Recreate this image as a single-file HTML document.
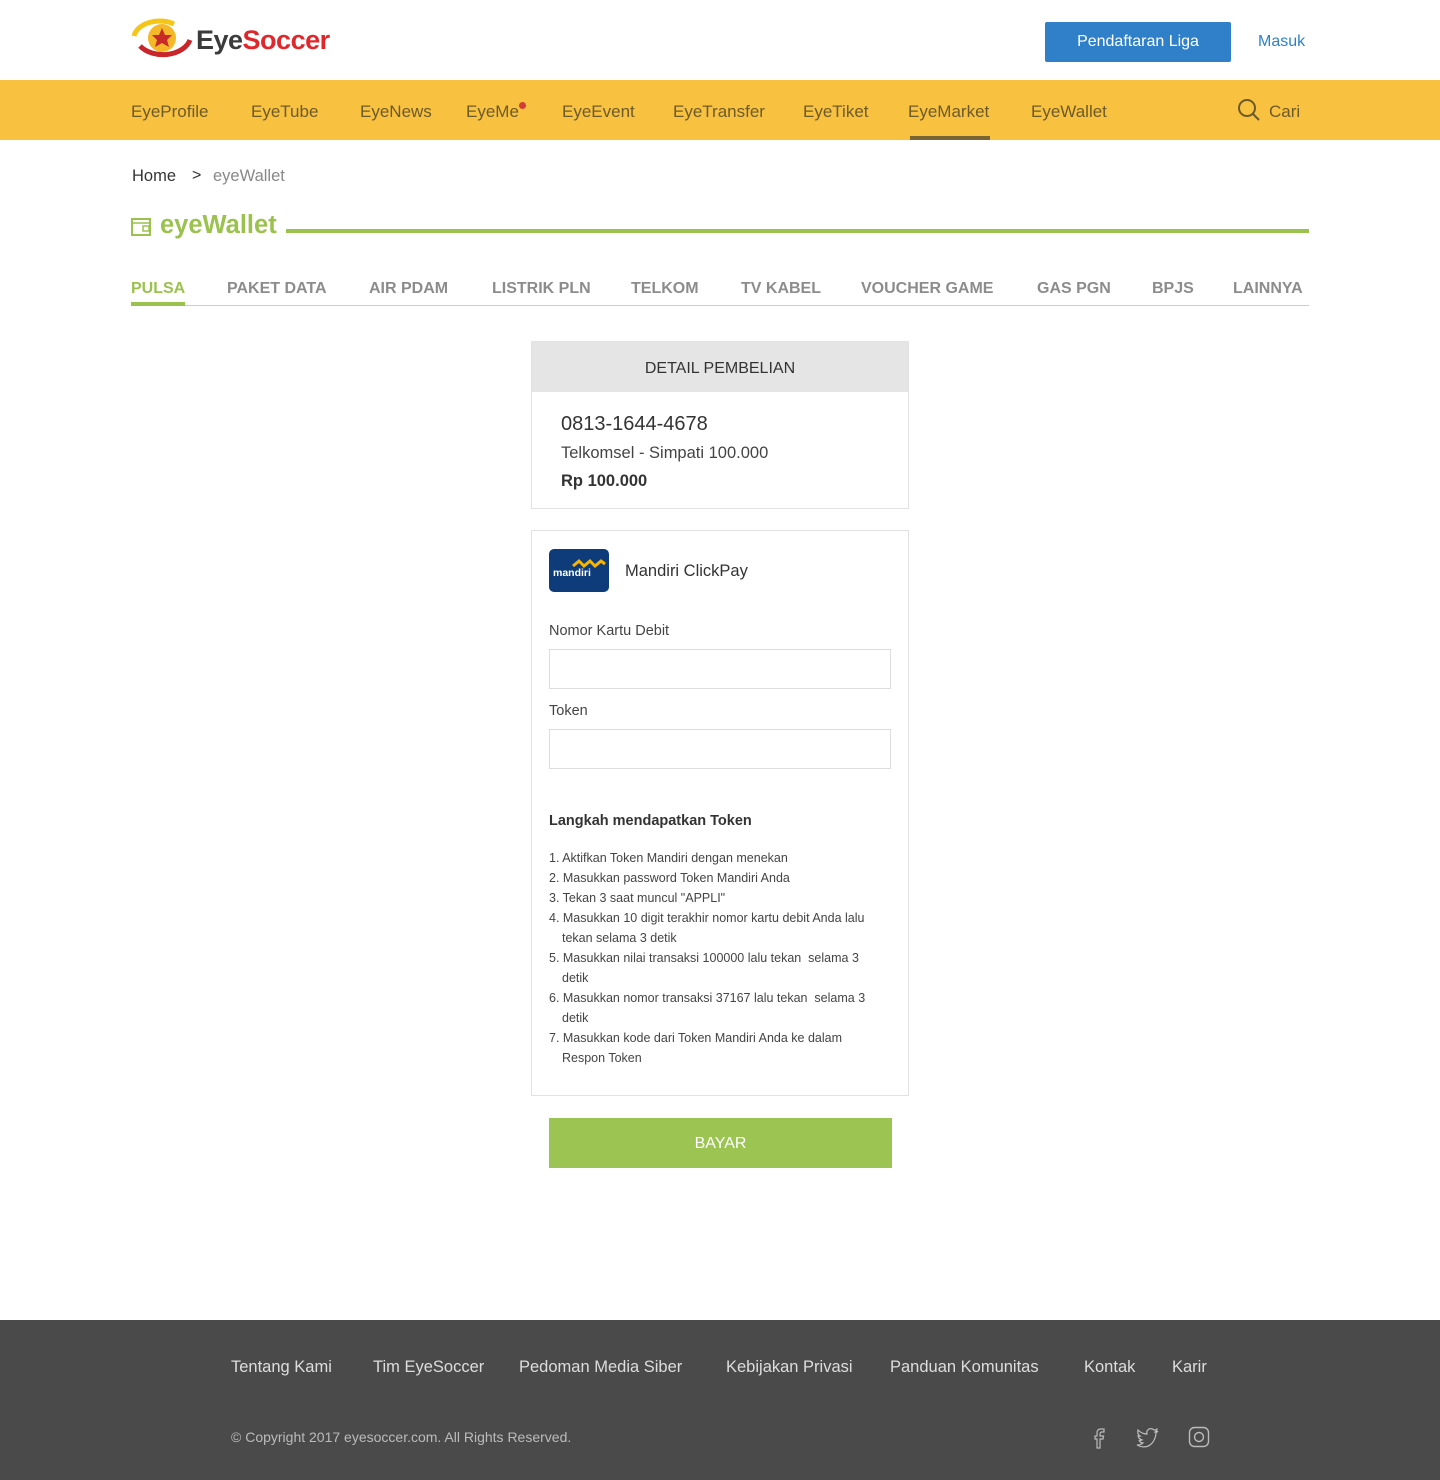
<!DOCTYPE html>
<html><head><meta charset="utf-8"><style>
*{margin:0;padding:0;box-sizing:border-box}
body{width:1440px;height:1480px;background:#fff;font-family:"Liberation Sans",sans-serif;position:relative;color:#333;overflow:hidden}
.a{position:absolute;white-space:nowrap}
.nav{position:absolute;top:80px;left:0;width:1440px;height:60px;background:#f8c13f}
.nav span{position:absolute;top:22px;font-size:17px;color:#6d5a2a}
.tab{position:absolute;top:280px;font-size:16px;font-weight:bold;color:#8c8c8c}
.box{position:absolute;left:531px;width:378px;border:1px solid #e2e2e2;background:#fff}
.inp{position:absolute;left:549px;width:342px;height:40px;border:1px solid #ddd}
.st{position:absolute;left:549px;font-size:12.5px;color:#444}
.foot{position:absolute;top:1320px;left:0;width:1440px;height:160px;background:#4a4a4a}
.foot span{position:absolute;top:38px;font-size:16.5px;color:#ddd}
</style></head><body>
<svg class="a" style="left:130px;top:18px" width="64" height="42" viewBox="0 0 64 42">
<path d="M4 18 A26 18 0 0 1 44 6" stroke="#f5c518" stroke-width="5" fill="none"/>
<circle cx="32" cy="20" r="14" fill="#f4b829"/><path d="M32 10 l3 7 7 0 -5 5 2 7 -7 -4 -7 4 2 -7 -5 -5 7 0z" fill="#c82a2a"/>
<path d="M10 28 A28 20 0 0 0 60 22" stroke="#c8262b" stroke-width="5" fill="none"/>
</svg>
<div class="a" style="left:196px;top:25px;font-size:27px;font-weight:bold;letter-spacing:-0.5px"><span style="color:#3b3b3b">Eye</span><span style="color:#e0282c">Soccer</span></div>
<div class="a" style="left:1045px;top:22px;width:186px;height:40px;background:#2f80c8;border-radius:2px;color:#fff;font-size:16px;text-align:center;line-height:40px">Pendaftaran Liga</div>
<div class="a" style="left:1258px;top:33px;font-size:16px;color:#2f80c8">Masuk</div>
<div class="nav">
<span style="left:131px">EyeProfile</span><span style="left:251px">EyeTube</span><span style="left:360px">EyeNews</span><span style="left:466px">EyeMe</span>
<div class="a" style="left:519px;top:22px;width:7px;height:7px;border-radius:50%;background:#d63a3a"></div>
<span style="left:562px">EyeEvent</span><span style="left:673px">EyeTransfer</span><span style="left:803px">EyeTiket</span><span style="left:908px">EyeMarket</span><span style="left:1031px">EyeWallet</span>
<div class="a" style="left:910px;top:56px;width:80px;height:4px;background:#7a6532"></div>
<svg class="a" style="left:1238px;top:19px" width="22" height="22" viewBox="0 0 22 22"><circle cx="9" cy="9" r="8" stroke="#6d5a2a" stroke-width="2" fill="none"/><path d="M15 15 l6 6" stroke="#6d5a2a" stroke-width="2"/></svg>
<span style="left:1269px">Cari</span>
</div>
<div class="a" style="left:132px;top:167px;font-size:16.5px;color:#333">Home</div>
<div class="a" style="left:192px;top:167px;font-size:16px;color:#333">&gt;</div>
<div class="a" style="left:213px;top:167px;font-size:16.5px;color:#888">eyeWallet</div>
<svg class="a" style="left:131px;top:216px" width="20" height="20" viewBox="0 0 20 20"><rect x="1" y="3" width="18" height="16" stroke="#9bc14e" stroke-width="2" fill="none"/><path d="M1 7 H19" stroke="#9bc14e" stroke-width="1.5"/><rect x="12" y="10" width="6" height="5" stroke="#9bc14e" stroke-width="1.5" fill="none"/></svg>
<div class="a" style="left:160px;top:211px;font-size:25.5px;font-weight:bold;color:#9bc14e">eyeWallet</div>
<div class="a" style="left:286px;top:229px;width:1023px;height:4px;background:#9bc14e"></div>
<div class="tab" style="left:131px;color:#9bc14e">PULSA</div>
<div class="tab" style="left:227px">PAKET DATA</div><div class="tab" style="left:369px">AIR PDAM</div><div class="tab" style="left:492px">LISTRIK PLN</div><div class="tab" style="left:631px">TELKOM</div><div class="tab" style="left:741px">TV KABEL</div><div class="tab" style="left:861px">VOUCHER GAME</div><div class="tab" style="left:1037px">GAS PGN</div><div class="tab" style="left:1152px">BPJS</div><div class="tab" style="left:1233px">LAINNYA</div>
<div class="a" style="left:131px;top:305px;width:1178px;height:1px;background:#ccc"></div>
<div class="a" style="left:131px;top:302px;width:54px;height:4px;background:#9bc14e"></div>
<div class="box" style="top:341px;height:168px"><div style="height:50px;background:#e5e5e5;text-align:center;line-height:53px;font-size:16px;color:#333">DETAIL PEMBELIAN</div></div>
<div class="a" style="left:561px;top:413px;font-size:20px;color:#333">0813-1644-4678</div>
<div class="a" style="left:561px;top:444px;font-size:16.5px;color:#444">Telkomsel - Simpati 100.000</div>
<div class="a" style="left:561px;top:472px;font-size:16.5px;font-weight:bold;color:#333">Rp 100.000</div>
<div class="box" style="top:530px;height:566px"></div>
<div class="a" style="left:549px;top:549px;width:60px;height:43px;background:#0e3b7a;border-radius:5px"></div>
<svg class="a" style="left:572px;top:558px" width="34" height="10" viewBox="0 0 34 10"><path d="M1 8 l6 -5 5 5 6 -5 5 5 6 -5 4 3" stroke="#f7b500" stroke-width="3" fill="none"/></svg>
<div class="a" style="left:553px;top:567px;font-size:10.5px;font-weight:bold;color:#fff">mandiri</div>
<div class="a" style="left:625px;top:562px;font-size:16.5px;color:#333">Mandiri ClickPay</div>
<div class="a" style="left:549px;top:623px;font-size:14.5px;color:#444">Nomor Kartu Debit</div>
<div class="inp" style="top:649px"></div>
<div class="a" style="left:549px;top:703px;font-size:14.5px;color:#444">Token</div>
<div class="inp" style="top:729px"></div>
<div class="a" style="left:549px;top:813px;font-size:14.5px;font-weight:bold;color:#333">Langkah mendapatkan Token</div>
<div class="st" style="top:851px">1. Aktifkan Token Mandiri dengan menekan</div>
<div class="st" style="top:871px">2. Masukkan password Token Mandiri Anda</div>
<div class="st" style="top:891px">3. Tekan 3 saat muncul "APPLI"</div>
<div class="st" style="top:911px">4. Masukkan 10 digit terakhir nomor kartu debit Anda lalu</div>
<div class="st" style="top:931px;left:562px">tekan selama 3 detik</div>
<div class="st" style="top:951px">5. Masukkan nilai transaksi 100000 lalu tekan&nbsp; selama 3</div>
<div class="st" style="top:971px;left:562px">detik</div>
<div class="st" style="top:991px">6. Masukkan nomor transaksi 37167 lalu tekan&nbsp; selama 3</div>
<div class="st" style="top:1011px;left:562px">detik</div>
<div class="st" style="top:1031px">7. Masukkan kode dari Token Mandiri Anda ke dalam</div>
<div class="st" style="top:1051px;left:562px">Respon Token</div>
<div class="a" style="left:549px;top:1118px;width:343px;height:50px;background:#9bc453;color:#fff;font-size:16px;text-align:center;line-height:52px">BAYAR</div>
<div class="foot">
<span style="left:231px">Tentang Kami</span><span style="left:373px">Tim EyeSoccer</span><span style="left:519px">Pedoman Media Siber</span><span style="left:726px">Kebijakan Privasi</span><span style="left:890px">Panduan Komunitas</span><span style="left:1084px">Kontak</span><span style="left:1172px">Karir</span>
<div class="a" style="left:231px;top:109px;font-size:14px;color:#bbb">© Copyright 2017 eyesoccer.com. All Rights Reserved.</div>
<svg class="a" style="left:1090px;top:107px" width="18" height="22" viewBox="0 0 18 22"><path d="M10 21 V12 H13 L13.5 9 H10 V7 Q10 5 12 5 H14 V2 H11 Q7 2 7 6 V9 H5 V12 H7 V21 Z" stroke="#bbb" stroke-width="1.2" fill="none"/></svg>
<svg class="a" style="left:1136px;top:107px" width="24" height="22" viewBox="0 0 24 22"><path d="M22 4 Q20 5 19 5 Q21 3 21 2 Q19 3 18 3 Q16 1 13 2 Q10 4 11 7 Q6 7 2 3 Q1 7 4 9 Q3 9 2 9 Q3 12 6 13 Q4 14 3 13 Q4 16 7 16 Q5 18 1 18 Q11 23 17 15 Q20 10 20 6 Q21 5 22 4 Z" stroke="#bbb" stroke-width="1.2" fill="none"/></svg>
<svg class="a" style="left:1188px;top:106px" width="22" height="22" viewBox="0 0 22 22"><rect x="1.5" y="1.5" width="19" height="19" rx="5" stroke="#bbb" stroke-width="1.4" fill="none"/><circle cx="11" cy="11" r="4.5" stroke="#bbb" stroke-width="1.4" fill="none"/></svg>
</div>
</body></html>
